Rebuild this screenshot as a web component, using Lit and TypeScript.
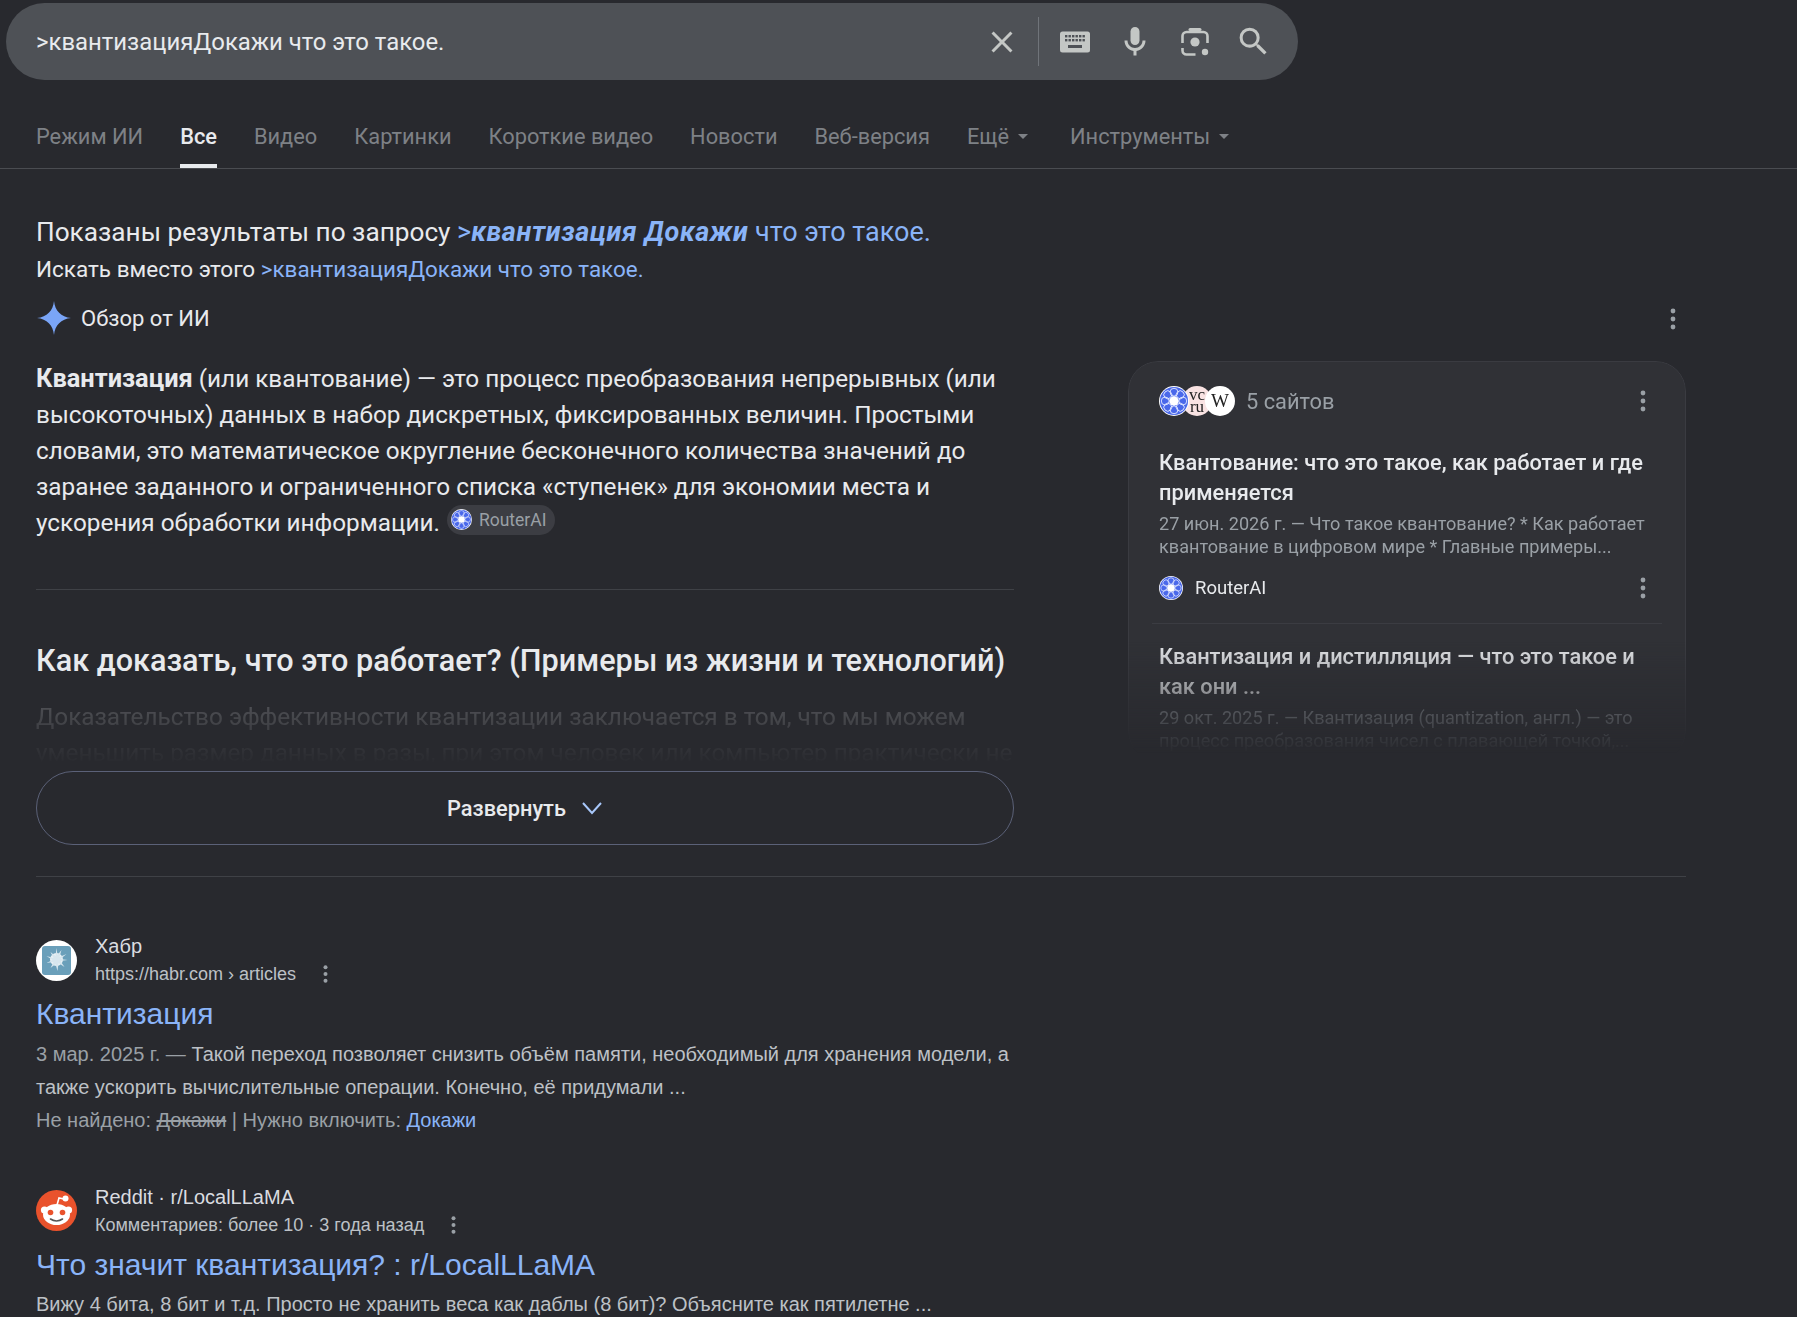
import { LitElement, html, css, svg } from 'lit';
import { customElement } from 'lit/decorators.js';

const kebab = html`<svg class="kebab" viewBox="0 0 6 24"><circle cx="3" cy="4" r="2.4"></circle><circle cx="3" cy="12" r="2.4"></circle><circle cx="3" cy="20" r="2.4"></circle></svg>`;

// blue lace ball used for RouterAI
const rosette = (cls: string) => html`<svg class=${cls} viewBox="0 0 32 32">
  <circle cx="16" cy="16" r="16" fill="#fff"></circle>
  <circle cx="16" cy="16" r="15" fill="#4a68ea"></circle>
  ${[0, 45, 90, 135, 180, 225, 270, 315].map(
    (a) => svg`<circle cx="16" cy="6.6" r="4.2" fill="none" stroke="#dfe5ff" stroke-width="1" transform="rotate(${a} 16 16)"></circle>`
  )}
  <circle cx="16" cy="16" r="5" fill="#fff"></circle>
</svg>`;

@customElement('app-root')
export class AppRoot extends LitElement {
  static styles = css`
    :host {
      display: block;
      width: 1797px;
      height: 1317px;
      overflow: hidden;
      background: #28292e;
      font-family: Roboto, sans-serif;
      color: #e8eaed;
    }
    a { color: inherit; text-decoration: none; }

    .search {
      margin: 3px 0 0 6px;
      width: 1292px;
      height: 77px;
      border-radius: 39px;
      background: #4e5156;
      display: flex;
      align-items: center;
      box-sizing: border-box;
      padding-left: 30px;
    }
    .query { flex: 1; font-size: 23.9px; color: #e8eaed; }
    .search-icons { display: flex; align-items: center; }
    .search-icons svg { display: block; fill: #c4c7c5; }
    .ic-close { width: 36px; height: 36px; margin-right: 18px; }
    .vline { width: 1px; height: 49px; background: #70747a; margin-right: 20px; }
    .ic-keys { width: 32px; height: 24px; margin-right: 26px; }
    .ic-mic { width: 36px; height: 36px; margin-right: 26px; }
    .ic-lens { width: 32px; height: 32px; margin-right: 24px; }
    .ic-search { width: 37px; height: 37px; margin-right: 26px; }

    .tabs {
      height: 89px;
      box-sizing: border-box;
      border-bottom: 1px solid #4a4c51;
      padding-left: 36px;
      display: flex;
      gap: 37px;
      font-size: 21.8px;
      color: #7e8186;
    }
    .tab { display: flex; align-items: center; gap: 9px; height: 60px; margin-top: 24px; padding-top: 5px; box-sizing: border-box; }
    .tab.active { color: #e8eaed; font-weight: 500; border-bottom: 4px solid #e8eaed; height: 64px; }
    .tab .caret { width: 0; height: 0; border: 5.5px solid transparent; border-top-color: #7e8186; border-bottom: 0; margin-right: 5px; }

    .content { padding-left: 36px; width: 1650px; }
    .notice { font-size: 26.2px; line-height: 36px; margin-top: 45px; color: #e8eaed; }
    .notice a { color: #8ab4f8; font-size: 27px; }
    .notice b { font-style: italic; font-weight: 700; letter-spacing: 0.6px; }
    .instead { font-size: 22.5px; line-height: 30px; margin-top: 4px; }
    .instead a { color: #8ab4f8; font-size: 22.4px; }

    .ai-head { display: flex; align-items: center; margin-top: 16px; height: 36px; font-size: 22px; gap: 10px; }
    .ai-head svg.star { width: 34px; height: 34px; margin-left: 1px; fill: #7aa5f7; }
    .ai-head .kebab { margin-left: auto; margin-right: 10px; margin-top: 2px; }

    .kebab { width: 6px; height: 24px; fill: #9aa0a6; flex: none; display: block; }

    .ai-body { display: grid; grid-template-columns: 978px 558px; column-gap: 114px; }
    .lead { font-size: 24.3px; line-height: 36px; margin: 24px 0 0; color: #e8eaed; }
    .lead b { font-weight: 700; font-size: 25.4px; }
    .chip {
      display: inline-flex; align-items: center; gap: 7px;
      height: 30px; padding: 0 9px 0 4px; margin: -6px 0 -6px 1px;
      background: #3c3d43; border-radius: 15px;
      font-size: 17.5px; color: #9aa0a6; vertical-align: 1px;
    }
    .chip-logo { width: 21px; height: 21px; display: block; }
    .rule { height: 1px; background: #3f4146; border: 0; margin: 0; }
    .left-rule { margin-top: 48px; }
    h2 { font-size: 30.6px; font-weight: 500; line-height: 40px; margin: 51px 0 0; color: #e8eaed; white-space: nowrap; }
    .faded {
      font-size: 24.3px; line-height: 36px; margin: 18px 0 0; height: 72px; overflow: hidden; white-space: nowrap;
      color: #e8eaed;
      -webkit-mask-image: linear-gradient(#00000038, #00000000 90%);
      mask-image: linear-gradient(#00000038, #00000000 90%);
    }
    .more {
      height: 74px; box-sizing: border-box;
      border: 1px solid #5b6178; border-radius: 37px;
      display: flex; align-items: center; justify-content: center; gap: 15px;
      font-size: 21.8px; font-weight: 500; color: #e8eaed;
    }
    .more svg { width: 22px; height: 14px; fill: none; stroke: #a8c7fa; stroke-width: 2; }

    .card {
      margin-top: 25px;
      height: 400px;
      box-sizing: border-box;
      border: 1px solid #3a3b41;
      border-radius: 30px;
      background: #303136;
      padding: 24px 30px 0;
      -webkit-mask-image: linear-gradient(#000 70%, #00000000 98%);
      mask-image: linear-gradient(#000 70%, #00000000 98%);
    }
    .card-head { display: flex; align-items: center; height: 30px; font-size: 21.8px; color: #9aa0a6; }
    .stack { display: flex; margin-right: 11px; }
    .stack > * { margin-left: -7px; }
    .stack > *:first-child { margin-left: 0; }
    .stack-logo { width: 30px; height: 30px; display: block; position: relative; z-index: 1; }
    .disc {
      width: 30px; height: 30px; border-radius: 50%;
      font-family: 'Liberation Serif', serif; color: #222; text-align: center;
    }
    .disc.vc { background: #f9e3e3; font-size: 17px; line-height: 12px; padding-top: 3px; height: 27px; }
    .disc.wiki { background: #fff; font-size: 19px; line-height: 30px; }
    .card-head .kebab, .src .kebab { margin-left: auto; margin-right: 9px; }
    .item-title { font-size: 21.8px; font-weight: 500; line-height: 29.5px; color: #e8eaed; }
    .first { margin-top: 32px; }
    .item-desc { font-size: 18.1px; line-height: 23px; color: #9aa0a6; margin-top: 5px; }
    .src { display: flex; align-items: center; gap: 12px; font-size: 18.5px; margin-top: 17px; height: 26px; color: #e8eaed; }
    .src-logo { width: 24px; height: 24px; display: block; }
    .card .rule { margin: 22px -7px 0; background: #3b3c42; }
    .second { margin-top: 18px; }

    .main-rule { margin-top: 31px; }

    .results { padding-left: 36px; width: 1000px; margin-top: 55px; font-family: 'Liberation Sans', Arial, sans-serif; }
    .result + .result { margin-top: 46px; }
    .site { display: grid; grid-template-columns: 41px auto; column-gap: 18px; align-items: center; height: 56px; }
    .site-logo { width: 41px; height: 41px; display: block; grid-row: span 2; }
    .site-name { font-size: 20px; line-height: 28px; color: #dadce0; }
    .site-url { font-size: 18px; line-height: 28px; color: #bdc1c6; display: flex; align-items: center; gap: 27px; }
    .site-url .kebab { width: 5px; height: 20px; }
    .r-title { font-size: 30px; line-height: 40px; color: #8ab4f8; margin-top: 6px; display: block; }
    .r-desc { font-size: 20px; line-height: 33px; color: #bdc1c6; margin-top: 3.5px; }
    .r-desc .dim { color: #9aa0a6; }
    .r-desc a { color: #8ab4f8; }
    .r-desc s { color: #9aa0a6; }
  `;

  render() {
    return html`
      <div class="search">
        <div class="query">&gt;квантизацияДокажи что это такое.</div>
        <div class="search-icons">
          <svg class="ic-close" viewBox="0 0 24 24"><path d="M19 6.41L17.59 5 12 10.59 6.41 5 5 6.41 10.59 12 5 17.59 6.41 19 12 13.41 17.59 19 19 17.59 13.41 12z"></path></svg>
          <div class="vline"></div>
          <svg class="ic-keys" viewBox="0 0 32 24">
            <rect x="1" y="1.5" width="30" height="21" rx="2.5"></rect>
            <g fill="#4e5156">
              ${[6, 9.5, 13, 16.5, 20, 23.5].map((x) => svg`<rect x=${x} y="5" width="2.4" height="2.4"></rect><rect x=${x} y="9" width="2.4" height="2.4"></rect>`)}
              <rect x="9" y="15" width="14" height="3"></rect>
            </g>
          </svg>
          <svg class="ic-mic" viewBox="0 0 24 24"><path d="M12 14c1.66 0 3-1.34 3-3V5c0-1.66-1.34-3-3-3S9 3.34 9 5v6c0 1.66 1.34 3 3 3z"></path><path d="M17 11c0 2.76-2.24 5-5 5s-5-2.24-5-5H5c0 3.53 2.61 6.43 6 6.92V21h2v-3.08c3.39-.49 6-3.39 6-6.92h-2z"></path></svg>
          <svg class="ic-lens" viewBox="0 0 32 32">
            <path d="M11 3.5h10" fill="none" stroke="#c4c7c5" stroke-width="3" stroke-linecap="round"></path>
            <path d="M3.5 17v-7a4 4 0 0 1 4-4h17a4 4 0 0 1 4 4v7M3.5 22v2.5a4 4 0 0 0 4 4h9" fill="none" stroke="#c4c7c5" stroke-width="2.6"></path>
            <circle cx="16" cy="16" r="4.6"></circle>
            <circle cx="26" cy="26" r="3.2"></circle>
          </svg>
          <svg class="ic-search" viewBox="0 0 24 24"><path d="M15.5 14h-.79l-.28-.27A6.471 6.471 0 0 0 16 9.5 6.5 6.5 0 1 0 9.5 16c1.61 0 3.09-.59 4.23-1.57l.27.28v.79l5 4.99L20.49 19l-4.99-5zm-6 0C7.01 14 5 11.99 5 9.5S7.01 5 9.5 5 14 7.01 14 9.5 11.99 14 9.5 14z"></path></svg>
        </div>
      </div>

      <nav class="tabs">
        <a class="tab">Режим ИИ</a>
        <a class="tab active">Все</a>
        <a class="tab">Видео</a>
        <a class="tab">Картинки</a>
        <a class="tab">Короткие видео</a>
        <a class="tab">Новости</a>
        <a class="tab">Веб-версия</a>
        <a class="tab">Ещё <span class="caret"></span></a>
        <a class="tab">Инструменты <span class="caret"></span></a>
      </nav>

      <div class="content">
        <div class="notice">Показаны результаты по запросу <a>&gt;<b>квантизация Докажи</b> что это такое.</a></div>
        <div class="instead">Искать вместо этого <a>&gt;квантизацияДокажи что это такое.</a></div>

        <div class="ai-head">
          <svg class="star" viewBox="0 0 24 24"><path d="M12 0C12.7 7 17 11.3 24 12 17 12.7 12.7 17 12 24 11.3 17 7 12.7 0 12 7 11.3 11.3 7 12 0Z"></path></svg>
          <span>Обзор от ИИ</span>
          ${kebab}
        </div>

        <div class="ai-body">
          <div>
            <p class="lead"><b>Квантизация</b> (или квантование) — это процесс преобразования непрерывных (или высокоточных) данных в набор дискретных, фиксированных величин. Простыми словами, это математическое округление бесконечного количества значений до заранее заданного и ограниченного списка «ступенек» для экономии места и ускорения обработки информации. <span class="chip">${rosette('chip-logo')}RouterAI</span></p>
            <hr class="rule left-rule" />
            <h2>Как доказать, что это работает? (Примеры из жизни и технологий)</h2>
            <div class="faded">Доказательство эффективности квантизации заключается в том, что мы можем<br />уменьшить размер данных в разы, при этом человек или компьютер практически не</div>
            <div class="more">Развернуть <svg viewBox="0 0 22 14"><path d="M2 2l9 10 9-10"></path></svg></div>
          </div>
          <aside class="card">
            <div class="card-head">
              <div class="stack">
                ${rosette('stack-logo')}
                <div class="disc vc">vc<br />ru</div>
                <div class="disc wiki">W</div>
              </div>
              5 сайтов
              ${kebab}
            </div>
            <div class="item-title first">Квантование: что это такое, как работает и где применяется</div>
            <div class="item-desc">27 июн. 2026 г. — Что такое квантование? * Как работает квантование в цифровом мире * Главные примеры...</div>
            <div class="src">${rosette('src-logo')}RouterAI ${kebab}</div>
            <hr class="rule" />
            <div class="item-title second">Квантизация и дистилляция — что это такое и как они ...</div>
            <div class="item-desc">29 окт. 2025 г. — Квантизация (quantization, англ.) — это процесс преобразования чисел с плавающей точкой,...</div>
          </aside>
        </div>
        <hr class="rule main-rule" />
      </div>

      <div class="results">
        <div class="result">
          <div class="site">
            <svg class="site-logo" viewBox="0 0 41 41">
              <circle cx="20.5" cy="20.5" r="20.5" fill="#fff"></circle>
              <rect x="6" y="6" width="29" height="29" rx="3" fill="#6a9fba"></rect>
              <circle cx="20.5" cy="19.5" r="6.5" fill="#e9f1f5"></circle>
              <path d="M20.5 8l1 7 4-5-2 7 7-3-6 5 7 1-7 1 4 6-6-4-1 8-2-7-5 4 3-6-7 1 6-3-6-4 7 2-3-6 5 4z" fill="#d7e6ee"></path>
            </svg>
            <div class="site-name">Хабр</div>
            <div class="site-url">https://habr.com › articles ${kebab}</div>
          </div>
          <a class="r-title">Квантизация</a>
          <div class="r-desc">
            <span class="dim">3 мар. 2025 г. — </span>Такой переход позволяет снизить объём памяти, необходимый для хранения модели, а также ускорить вычислительные операции. Конечно, её придумали ...<br />
            <span class="dim">Не найдено: <s>Докажи</s> | Нужно включить: </span><a>Докажи</a>
          </div>
        </div>
        <div class="result">
          <div class="site">
            <svg class="site-logo" viewBox="0 0 41 41">
              <circle cx="20.5" cy="20.5" r="20.5" fill="#e9522c"></circle>
              <circle cx="29.5" cy="8.5" r="3" fill="#fff"></circle>
              <path d="M21 15l2-7 5 1" fill="none" stroke="#fff" stroke-width="1.6"></path>
              <circle cx="8.5" cy="20" r="3.6" fill="#fff"></circle>
              <circle cx="32.5" cy="20" r="3.6" fill="#fff"></circle>
              <ellipse cx="20.5" cy="24.5" rx="13.5" ry="10.5" fill="#fff"></ellipse>
              <circle cx="14.5" cy="22.5" r="2.8" fill="#e9522c"></circle>
              <circle cx="26.5" cy="22.5" r="2.8" fill="#e9522c"></circle>
              <path d="M14.5 29c3.5 2.6 8.5 2.6 12 0" fill="none" stroke="#555" stroke-width="1.6" stroke-linecap="round"></path>
            </svg>
            <div class="site-name">Reddit · r/LocalLLaMA</div>
            <div class="site-url">Комментариев: более 10 · 3 года назад ${kebab}</div>
          </div>
          <a class="r-title">Что значит квантизация? : r/LocalLLaMA</a>
          <div class="r-desc">Вижу 4 бита, 8 бит и т.д. Просто не хранить веса как даблы (8 бит)? Объясните как пятилетне ...</div>
        </div>
      </div>
    `;
  }
}
